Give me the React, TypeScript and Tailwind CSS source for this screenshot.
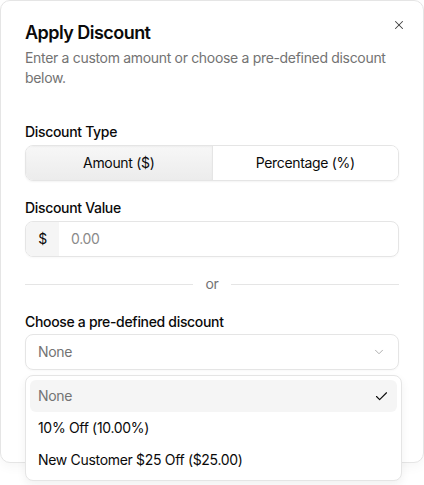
import React from "react";

export default function App() {
  const font = { fontFamily: "Inter, 'Noto Sans', sans-serif" };
  return (
    <div className="relative w-[424px] h-[485px] bg-white overflow-hidden tracking-[-0.02em]" style={font}>
      <div className="w-[424px] h-[463px] border border-[#e5e5e5] rounded-[10px] bg-white px-6 pt-[18px] shadow-[0_4px_12px_rgba(0,0,0,0.04)]">
        <div className="relative">
          <h2 className="text-[18px] leading-7 font-semibold text-[#0a0a0a] tracking-[-0.03em]">Apply Discount</h2>
          <button className="absolute right-[-8px] top-[-2px] w-4 h-4 flex items-center justify-center text-[#404040]">
            <svg width="14" height="14" viewBox="0 0 24 24" fill="none" stroke="currentColor" strokeWidth="1.8" strokeLinecap="round">
              <path d="M18 6 6 18" />
              <path d="m6 6 12 12" />
            </svg>
          </button>
          <p className="mt-px text-sm leading-5 text-[#737373]">
            Enter a custom amount or choose a pre-defined discount below.
          </p>
        </div>

        <div className="mt-[34px] text-sm leading-5 font-medium text-[#0a0a0a]">Discount Type</div>
        <div className="mt-[3px] flex h-9 rounded-lg border border-[#e5e5e5] overflow-hidden shadow-[0_1px_2px_rgba(0,0,0,0.05)] text-sm text-[#0a0a0a]">
          <div className="flex-1 flex items-center justify-center bg-gradient-to-b from-[#f7f7f7] to-[#ececec] border-r border-[#e5e5e5] shadow-[inset_0_1px_2px_rgba(0,0,0,0.04)]">
            Amount ($)
          </div>
          <div className="flex-1 flex items-center justify-center bg-white">Percentage (%)</div>
        </div>

        <div className="mt-[17px] text-sm leading-5 font-medium text-[#0a0a0a]">Discount Value</div>
        <div className="mt-[3px] flex h-9 rounded-lg border border-[#e5e5e5] overflow-hidden shadow-[0_1px_2px_rgba(0,0,0,0.03)] text-sm">
          <div className="w-[33px] flex items-center justify-center bg-[#f5f5f5] text-[#0a0a0a]">$</div>
          <div className="flex-1 flex items-center pl-3 text-[#8a8a8a]">0.00</div>
        </div>

        <div className="mt-[17px] flex items-center gap-3 h-5">
          <div className="flex-1 h-px bg-[#e5e5e5]" />
          <span className="text-sm leading-5 text-[#737373]">or</span>
          <div className="flex-1 h-px bg-[#e5e5e5]" />
        </div>

        <div className="mt-[18px] text-sm leading-5 font-medium text-[#0a0a0a]">Choose a pre-defined discount</div>
        <div className="mt-[2px] flex items-center justify-between h-9 rounded-lg border border-[#e5e5e5] px-3 shadow-[0_1px_2px_rgba(0,0,0,0.03)] text-sm text-[#737373]">
          <span>None</span>
          <svg width="14" height="14" viewBox="0 0 24 24" fill="none" stroke="#a3a3a3" strokeWidth="1.5" strokeLinecap="round" strokeLinejoin="round">
            <path d="m6 9 6 6 6-6" />
          </svg>
        </div>
      </div>

      <div className="absolute left-[25px] top-[375px] w-[377px] rounded-lg border border-[#e5e5e5] bg-white p-1 shadow-[0_4px_10px_rgba(0,0,0,0.06)] text-sm">
        <div className="flex items-center justify-between h-8 rounded-md bg-[#f5f5f5] px-2 text-[#737373]">
          <span>None</span>
          <svg width="15" height="15" viewBox="0 0 24 24" fill="none" stroke="#0a0a0a" strokeWidth="1.8" strokeLinecap="round" strokeLinejoin="round">
            <path d="M20 6 9 17l-5-5" />
          </svg>
        </div>
        <div className="flex items-center h-8 px-2 text-[#0a0a0a]">10% Off (10.00%)</div>
        <div className="flex items-center h-8 px-2 text-[#0a0a0a]">New Customer $25 Off ($25.00)</div>
      </div>
    </div>
  );
}
